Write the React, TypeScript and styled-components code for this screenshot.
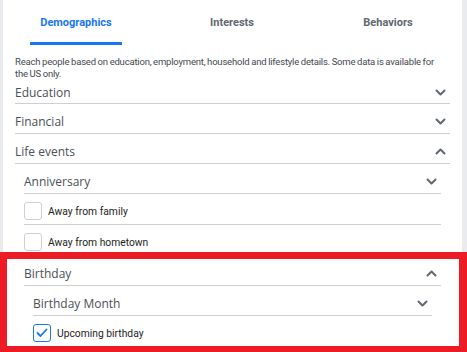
import React from "react";
import styled, { createGlobalStyle } from "styled-components";

const GlobalStyle = createGlobalStyle`
    html, body {
        margin: 0;
        padding: 0;
        background: #e9ebee;
        overflow: hidden;
    }
    body {
        font-family: Roboto, "Liberation Sans", sans-serif;
    }
`;

//* chevron icon
const Chevron = ({ up = false }: { up?: boolean }) => (
    <svg width="11" height="7" viewBox="0 0 11 7">
        <path
            d={up ? "M1.5 5.5L5.5 1.5L9.5 5.5" : "M1.5 1.5L5.5 5.5L9.5 1.5"}
            fill="none"
            stroke="#606770"
            strokeWidth="2"
            strokeLinecap="round"
            strokeLinejoin="round"
        />
    </svg>
);

const CheckMark = () => (
    <svg width="12" height="10" viewBox="0 0 12 10">
        <path
            d="M1.5 5L4.5 8L10.5 1.5"
            fill="none"
            stroke="#1877f2"
            strokeWidth="1.8"
            strokeLinecap="round"
            strokeLinejoin="round"
        />
    </svg>
);

type Item =
    | { kind: "section"; label: string; open?: boolean; level: number }
    | { kind: "check"; label: string; checked?: boolean; level: number; last?: boolean };

const items: Item[] = [
    { kind: "section", label: "Education", level: 0 },
    { kind: "section", label: "Financial", level: 0 },
    { kind: "section", label: "Life events", open: true, level: 0 },
    { kind: "section", label: "Anniversary", level: 1 },
    { kind: "check", label: "Away from family", level: 1 },
    { kind: "check", label: "Away from hometown", level: 1 },
    { kind: "section", label: "Birthday", open: true, level: 1 },
    { kind: "section", label: "Birthday Month", level: 2 },
    { kind: "check", label: "Upcoming birthday", checked: true, level: 2, last: true },
];

const tabs = ["Demographics", "Interests", "Behaviors"];

const App = () => {
    return (
        <>
            <GlobalStyle />
            <Page>
                <Panel>
                    <TabBar>
                        {tabs.map((t, i) => (
                            <Tab key={t} $active={i === 0}>
                                {t}
                            </Tab>
                        ))}
                    </TabBar>

                    <Intro>
                        Reach people based on education, employment, household and lifestyle
                        details. Some data is available for the US only.
                    </Intro>

                    <List>
                        {items.map((item) =>
                            item.kind === "section" ? (
                                <SectionRow key={item.label} $level={item.level}>
                                    <SectionLabel>{item.label}</SectionLabel>
                                    <Chevron up={item.open} />
                                </SectionRow>
                            ) : (
                                <CheckRow key={item.label} $level={item.level} $last={item.last}>
                                    <Box $checked={item.checked}>
                                        {item.checked && <CheckMark />}
                                    </Box>
                                    <CheckLabel>{item.label}</CheckLabel>
                                </CheckRow>
                            )
                        )}
                    </List>
                </Panel>

                {/* annotation frame */}
                <Highlight />
            </Page>
        </>
    );
};

//* ----- styled components -----
const Page = styled.div`
    position: relative;
    width: 467px;
    height: 352px;
    overflow: hidden;
    background: #e9ebee;
`;

const Panel = styled.div`
    margin-left: 3px;
    width: 459px;
    height: 352px;
    background: #ffffff;
    padding: 0 12px;
    box-sizing: border-box;
    overflow: hidden;
`;

const TabBar = styled.div`
    display: flex;
    margin: 0 -17px;
    height: 45px;
`;

const Tab = styled.div<{ $active?: boolean }>`
    position: relative;
    width: 156px;
    display: flex;
    justify-content: center;
    padding-top: 16px;
    box-sizing: border-box;
    font-size: 11px;
    font-weight: 700;
    color: ${(p) => (p.$active ? "#1877f2" : "#606770")};

    &::after {
        content: "";
        display: ${(p) => (p.$active ? "block" : "none")};
        position: absolute;
        bottom: 0;
        left: 32px;
        width: 92px;
        height: 3px;
        background: #1877f2;
    }
`;

const Intro = styled.p`
    margin: 11px 0 0;
    padding-right: 8px;
    font-size: 9.5px;
    letter-spacing: -0.2px;
    word-spacing: -0.4px;
    line-height: 12px;
    color: #444950;
`;

const List = styled.div`
    display: flex;
    flex-direction: column;
`;

const SectionRow = styled.div<{ $level: number }>`
    display: flex;
    align-items: center;
    justify-content: space-between;
    height: 24px;
    padding: 5px 4px 0 0;
    margin-left: ${(p) => p.$level * 9}px;
    margin-right: ${(p) => p.$level * 9}px;
    border-bottom: 1px solid #ccd0d5;

    &:first-child {
        padding-top: 2px;
        height: 21px;
    }
`;

const SectionLabel = styled.span`
    font-family: "Open Sans", "Liberation Sans", sans-serif;
    font-size: 12px;
    color: #4b4f56;
`;

const CheckRow = styled.div<{ $level: number; $last?: boolean }>`
    display: flex;
    align-items: center;
    gap: 6px;
    height: 26px;
    padding-top: 4px;
    margin-left: ${(p) => p.$level * 9}px;
    margin-right: ${(p) => p.$level * 9}px;
    border-bottom: 1px solid ${(p) => (p.$last ? "transparent" : "#ccd0d5")};
`;

const Box = styled.div<{ $checked?: boolean }>`
    width: 16px;
    height: 16px;
    border: 1px solid ${(p) => (p.$checked ? "#1877f2" : "#ccd0d5")};
    border-radius: 3px;
    display: flex;
    align-items: center;
    justify-content: center;
    background: #fff;
`;

const CheckLabel = styled.span`
    font-size: 10.3px;
    color: #1c1e21;
`;

const Highlight = styled.div`
    position: absolute;
    left: 0;
    top: 252px;
    width: 467px;
    height: 100px;
    box-sizing: border-box;
    border: 7px solid #ed1c24;
    border-right-width: 8px;
    border-bottom-width: 6px;
    pointer-events: none;
`;

export default App;
